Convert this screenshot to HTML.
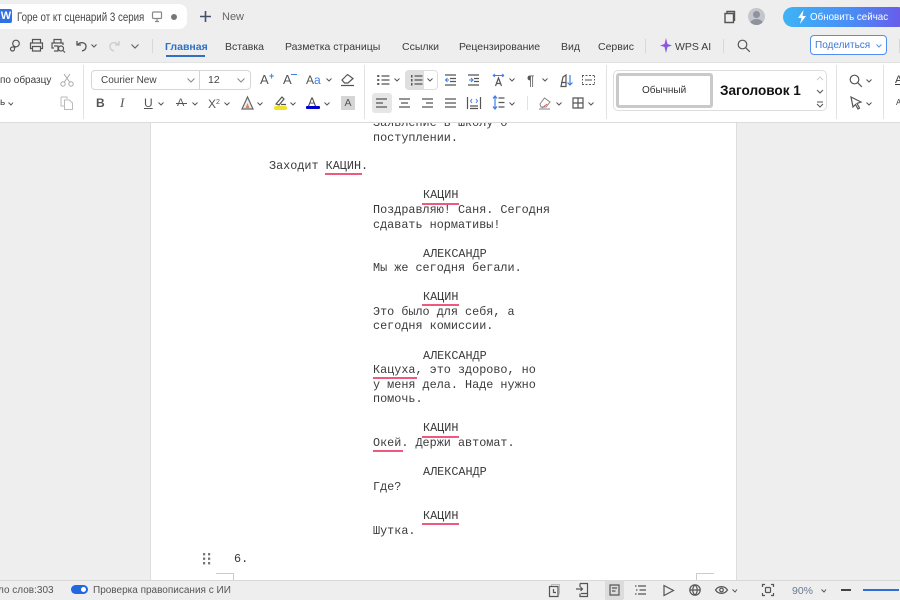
<!DOCTYPE html>
<html><head><meta charset="utf-8">
<style>
html,body{margin:0;padding:0}
body{width:900px;height:600px;overflow:hidden;background:#eeeeee;position:relative;font-family:"Liberation Sans","Noto Sans CJK SC",sans-serif;color:#3c3c3c;filter:blur(.25px)}
.a{position:absolute;white-space:nowrap}
.t{position:absolute;white-space:nowrap;font-size:11px;line-height:14px}
.m{position:absolute;white-space:nowrap;font-family:"Liberation Mono",monospace;font-size:11.8px;line-height:14px;color:#3a3a3a}
.u{position:absolute;height:2px;background:#ee5a7e}
svg{position:absolute;overflow:visible}
.s{fill:none;stroke:#555;stroke-width:1.2}
</style></head><body>

<!-- document page -->
<div class="a" style="left:150px;top:120px;width:587px;height:470px;background:#fff;border-right:1px solid #ddd;border-left:1px solid #ddd;box-sizing:border-box"></div>
<div class="m" style="left:373px;top:116px">Заявление в школу о</div>
<div class="m" style="left:373px;top:131px">поступлении.</div>
<div class="m" style="left:269px;top:159px">Заходит КАЦИН.</div>
<div class="u" style="left:325px;top:173px;width:37px"></div>
<div class="m" style="left:423px;top:188px">КАЦИН</div>
<div class="u" style="left:422px;top:203px;width:37px"></div>
<div class="m" style="left:373px;top:203px">Поздравляю! Саня. Сегодня</div>
<div class="m" style="left:373px;top:218px">сдавать нормативы!</div>
<div class="m" style="left:423px;top:247px">АЛЕКСАНДР</div>
<div class="m" style="left:373px;top:261px">Мы же сегодня бегали.</div>
<div class="m" style="left:423px;top:290px">КАЦИН</div>
<div class="u" style="left:422px;top:304px;width:37px"></div>
<div class="m" style="left:373px;top:305px">Это было для себя, а</div>
<div class="m" style="left:373px;top:319px">сегодня комиссии.</div>
<div class="m" style="left:423px;top:349px">АЛЕКСАНДР</div>
<div class="m" style="left:373px;top:363px">Кацуха, это здорово, но</div>
<div class="u" style="left:373px;top:377px;width:44px"></div>
<div class="m" style="left:373px;top:378px">у меня дела. Наде нужно</div>
<div class="m" style="left:373px;top:392px">помочь.</div>
<div class="m" style="left:423px;top:421px">КАЦИН</div>
<div class="u" style="left:422px;top:436px;width:37px"></div>
<div class="m" style="left:373px;top:436px">Окей. Держи автомат.</div>
<div class="u" style="left:373px;top:450px;width:30px"></div>
<div class="m" style="left:423px;top:465px">АЛЕКСАНДР</div>
<div class="m" style="left:373px;top:480px">Где?</div>
<div class="m" style="left:423px;top:509px">КАЦИН</div>
<div class="u" style="left:422px;top:523px;width:37px"></div>
<div class="m" style="left:373px;top:524px">Шутка.</div>
<div class="m" style="left:234px;top:552px">6.</div>
<svg style="left:202px;top:553px" width="10" height="13" fill="#777"><rect x="1" y="0" width="2.200" height="2.400"/><rect x="6" y="0" width="2.200" height="2.400"/><rect x="1" y="4.500" width="2.200" height="2.400"/><rect x="6" y="4.500" width="2.200" height="2.400"/><rect x="1" y="9" width="2.200" height="2.400"/><rect x="6" y="9" width="2.200" height="2.400"/></svg>
<div class="a" style="left:216px;top:573px;width:17px;height:8px;border-top:1px solid #ccc;border-right:1px solid #ccc"></div>
<div class="a" style="left:696px;top:573px;width:17px;height:8px;border-top:1px solid #ccc;border-left:1px solid #ccc"></div>

<!-- title bar -->
<div class="a" style="left:0;top:4px;width:187px;height:25px;background:#fff;border-radius:0 8px 8px 0"></div>
<div class="a" style="left:0;top:9px;width:12px;height:14px;background:#2f6fe8;border-radius:0 2px 2px 0;color:#fff;font-size:11px;font-weight:bold;line-height:14px;text-align:center">W</div>
<div class="t" style="left:17px;top:10px;font-size:12px;color:#444;transform:scaleX(.81);transform-origin:left">Горе от кт сценарий 3 серия</div>
<svg style="left:151px;top:11px" width="14" height="12"><rect class="s" x="1.500" y="1" width="9" height="6.500" rx="1" style="stroke:#888"/><path class="s" style="stroke:#888" d="M6 8v2M4 10.500h4"/></svg>
<div class="a" style="left:171px;top:14px;width:6px;height:6px;border-radius:50%;background:#777"></div>
<svg style="left:199px;top:10px" width="13" height="13"><path d="M6.500 1v11M1 6.500h11" stroke="#44506a" stroke-width="1.600" fill="none"/></svg>
<div class="t" style="left:222px;top:10px;color:#666;font-size:11px">New</div>

<svg style="left:722px;top:10px" width="14" height="14"><path d="M3 3.500h8.500v9H3z M5 3V1.500h7.500V11" fill="none" stroke="#555" stroke-width="1.400"/></svg>
<div class="a" style="left:748px;top:8px;width:17px;height:17px;border-radius:50%;background:#c3c6cc;overflow:hidden"><div class="a" style="left:5px;top:3px;width:7px;height:7px;border-radius:50%;background:#8d929c"></div><div class="a" style="left:2px;top:11px;width:13px;height:9px;border-radius:50%;background:#8d929c"></div></div>
<div class="a" style="left:783px;top:7px;width:125px;height:20px;border-radius:10px;background:linear-gradient(90deg,#3db4f5,#4a8cf6 55%,#6d55e8)"></div>
<svg style="left:796px;top:9px" width="12" height="16"><path d="M7.500 1 2 9h3.500L4 15l6-8H6.500z" fill="#fff"/></svg>
<div class="t" style="left:810px;top:10px;color:#fff;font-size:10.500px;transform:scaleX(.93);transform-origin:left">Обновить сейчас</div>

<!-- menu row -->
<svg style="left:9px;top:39px" width="13" height="13"><circle class="s" cx="7" cy="4.500" r="3.300"/><path class="s" d="M7 8H3.500a2 2 0 1 0 2 2V8"/></svg>
<svg style="left:29px;top:38px" width="15" height="14"><path class="s" d="M3.500 5V1.500h8V5M3.500 10.500H1.500V5h12v5.500h-2M3.500 8.500h8v4.500h-8z"/></svg>
<svg style="left:51px;top:38px" width="15" height="15"><path class="s" d="M3 5V1.500h7V5M3 10H1V5h11v2M3 8h4v5H3"/><circle class="s" cx="10" cy="10.500" r="2.500"/><path class="s" d="m12 12.500 2 2"/></svg>
<svg style="left:76px;top:40px" width="12" height="12"><path d="M1 1v4h4M1.500 5C4 1.500 10 2 10 6.500 10 9 8 10.500 6 11" fill="none" stroke="#555" stroke-width="1.300"/></svg>
<svg style="left:91px;top:44px" width="7" height="4"><path d="m.5.500 2.500 2.500L5.500.500" fill="none" stroke="#555" stroke-width="1.100"/></svg>
<svg style="left:108px;top:40px" width="12" height="12"><path d="M11 1v4H7M10.500 5C8 1.500 2 2 2 6.500 2 9 4 10.500 6 11" fill="none" stroke="#ccc" stroke-width="1.300"/></svg>
<svg style="left:131px;top:44px" width="9" height="5"><path d="m.5.500 3.500 3.500L7.500.500" fill="none" stroke="#666" stroke-width="1.200"/></svg>
<div class="a" style="left:152px;top:39px;width:1px;height:14px;background:#d8d8d8"></div>
<div class="t" style="left:165px;top:40px;color:#2f6fc4;font-weight:bold;font-size:10.500px">Главная</div>
<div class="a" style="left:166px;top:55px;width:39px;height:2px;background:#2f6fc4"></div>
<div class="t" style="left:225px;top:40px;font-size:10.500px">Вставка</div>
<div class="t" style="left:285px;top:40px;font-size:10.500px">Разметка страницы</div>
<div class="t" style="left:402px;top:40px;font-size:10.500px">Ссылки</div>
<div class="t" style="left:459px;top:40px;font-size:10.500px">Рецензирование</div>
<div class="t" style="left:561px;top:40px;font-size:10.500px">Вид</div>
<div class="t" style="left:598px;top:40px;font-size:10.500px">Сервис</div>
<div class="a" style="left:645px;top:39px;width:1px;height:14px;background:#d8d8d8"></div>
<svg style="left:659px;top:38px" width="14" height="15"><defs><linearGradient id="g" x1="0" y1="0" x2="1" y2="1"><stop offset="0" stop-color="#d43fd8"/><stop offset="1" stop-color="#3f6ff0"/></linearGradient></defs><path d="M7 0 8.500 6 13 7.500 8.500 9 7 15 5.500 9 1 7.500 5.500 6z" fill="url(#g)"/></svg>
<div class="t" style="left:675px;top:40px;font-size:10.500px">WPS AI</div>
<div class="a" style="left:723px;top:39px;width:1px;height:14px;background:#d8d8d8"></div>
<svg style="left:737px;top:39px" width="14" height="14"><circle class="s" cx="5.500" cy="5.500" r="4.300"/><path class="s" d="m8.800 8.800 4 4"/></svg>
<div class="a" style="left:810px;top:35px;width:77px;height:20px;box-sizing:border-box;background:#fff;border:1px solid #4f8ef0;border-radius:4px"></div>
<div class="t" style="left:815px;top:39px;color:#3c78d8;font-size:10px">Поделиться</div>
<svg style="left:876px;top:44px" width="7" height="4"><path d="m.5.500 2.500 2.500L5.500.500" fill="none" stroke="#5b8fe0" stroke-width="1"/></svg>
<div class="a" style="left:899px;top:39px;width:1px;height:14px;background:#d8d8d8"></div>

<!-- ribbon -->
<div class="a" style="left:0;top:62px;width:900px;height:61px;background:#fff;border-top:1px solid #e2e2e2;border-bottom:1px solid #dcdcdc;box-sizing:border-box"></div>
<div class="t" style="left:0;top:74px;font-size:10px">по образцу</div>
<svg style="left:60px;top:73px" width="14" height="14"><circle cx="3" cy="11" r="2.200" fill="none" stroke="#aaa"/><circle cx="11" cy="11" r="2.200" fill="none" stroke="#aaa"/><path d="M4 9.500 10 1M10 9.500 4 1" stroke="#aaa" fill="none"/></svg>
<svg style="left:60px;top:96px" width="14" height="14"><path d="M1 1h6v2M1 1v9h3M4.500 4h5l3 3v6.500h-8z" fill="none" stroke="#bbb"/></svg>
<div class="t" style="left:0;top:96px;font-size:10px">ь</div>
<svg style="left:8px;top:102px" width="6" height="4"><path d="m.5.500 2.500 2.500L5 .500" fill="none" stroke="#555"/></svg>
<div class="a" style="left:83px;top:65px;width:1px;height:54px;background:#e2e2e2"></div>

<!-- font box -->
<div class="a" style="left:91px;top:70px;width:160px;height:20px;box-sizing:border-box;border:1px solid #d5d5d5;border-radius:4px;background:#fff"></div>
<div class="a" style="left:199px;top:70px;width:1px;height:20px;background:#d5d5d5"></div>
<div class="t" style="left:101px;top:74px;font-size:10px;color:#444">Courier New</div>
<svg style="left:187px;top:78px" width="8" height="5"><path d="m.5.500 3.500 3.500L7.500.500" fill="none" stroke="#888"/></svg>
<div class="t" style="left:208px;top:73px;font-size:10.500px;color:#444">12</div>
<svg style="left:237px;top:78px" width="8" height="5"><path d="m.5.500 3.500 3.500L7.500.500" fill="none" stroke="#888"/></svg>
<div class="t" style="left:260px;top:73px;font-size:13px;color:#555">A</div>
<div class="t" style="left:269px;top:69px;font-size:9px;color:#3d7fe6;font-weight:bold">+</div>
<div class="t" style="left:283px;top:73px;font-size:13px;color:#555">A</div>
<div class="a" style="left:291px;top:74px;width:6px;height:1px;background:#3d7fe6"></div>
<div class="t" style="left:306px;top:73px;font-size:12px;color:#555">A<span style="color:#3d7fe6">a</span></div>
<svg style="left:326px;top:78px" width="6" height="4"><path d="m.5.500 2.500 2.500L5.500.500" fill="none" stroke="#555"/></svg>
<svg style="left:340px;top:73px" width="15" height="14"><path class="s" d="M2 7 7.500 1.500 13 5.500 8 10H4.500zM1 12.500h13"/></svg>
<div class="a" style="left:364px;top:65px;width:1px;height:54px;background:#e2e2e2"></div>

<!-- format row -->
<div class="t" style="left:96px;top:96px;font-weight:bold;font-size:12px;color:#555">B</div>
<div class="t" style="left:120px;top:96px;font-style:italic;font-size:13px;color:#555;font-family:'Liberation Serif',serif">I</div>
<div class="t" style="left:144px;top:96px;font-size:12px;color:#555;text-decoration:underline">U</div>
<svg style="left:158px;top:102px" width="6" height="4"><path d="m.5.500 2.500 2.500L5.500.500" fill="none" stroke="#555"/></svg>
<div class="t" style="left:177px;top:96px;font-size:11px;color:#555">A</div>
<div class="a" style="left:176px;top:103px;width:11px;height:1px;background:#555"></div>
<svg style="left:192px;top:102px" width="6" height="4"><path d="m.5.500 2.500 2.500L5.500.500" fill="none" stroke="#555"/></svg>
<div class="t" style="left:208px;top:96px;font-size:12px;color:#555">X<span style="font-size:7px;vertical-align:4px">2</span></div>
<svg style="left:224px;top:102px" width="6" height="4"><path d="m.5.500 2.500 2.500L5.500.500" fill="none" stroke="#555"/></svg>
<svg style="left:241px;top:96px" width="13" height="14"><path d="M6.500 1 1 13h11z" fill="#eee" stroke="#666" stroke-width="1.200"/><path d="M6.500 7 4.500 12h4z" fill="#e8824f"/></svg>
<svg style="left:257px;top:102px" width="6" height="4"><path d="m.5.500 2.500 2.500L5.500.500" fill="none" stroke="#555"/></svg>
<svg style="left:274px;top:95px" width="13" height="11"><path class="s" d="M2 9 8 2l2 2-5 6zM7 9.500h5"/></svg>
<div class="a" style="left:274px;top:106px;width:13px;height:4px;background:#f2e22e;border-radius:2px"></div>
<svg style="left:290px;top:102px" width="6" height="4"><path d="m.5.500 2.500 2.500L5.500.500" fill="none" stroke="#555"/></svg>
<div class="t" style="left:308px;top:95px;font-size:12px;color:#444">A</div>
<div class="a" style="left:306px;top:106px;width:14px;height:3px;background:#0000d0;border-radius:1px"></div>
<svg style="left:324px;top:102px" width="6" height="4"><path d="m.5.500 2.500 2.500L5.500.500" fill="none" stroke="#555"/></svg>
<div class="a" style="left:341px;top:96px;width:14px;height:14px;background:#d5d5d5;color:#555;font-size:10.500px;line-height:14px;text-align:center">A</div>

<!-- paragraph -->
<svg style="left:377px;top:74px" width="13" height="12"><g fill="#555"><rect x="0" y="1" width="2.500" height="2" rx="1"/><rect x="0" y="5" width="2.500" height="2" rx="1"/><rect x="0" y="9" width="2.500" height="2" rx="1"/></g><path class="s" d="M4.500 2h8M4.500 6h8M4.500 10h8"/></svg>
<svg style="left:394px;top:78px" width="6" height="4"><path d="m.5.500 2.500 2.500L5.500.500" fill="none" stroke="#555"/></svg>
<div class="a" style="left:405px;top:70px;width:33px;height:20px;box-sizing:border-box;border:1px solid #ddd;border-radius:4px;background:#fff"></div>
<div class="a" style="left:405px;top:70px;width:19px;height:20px;background:#dfdfdf;border-radius:4px 0 0 4px"></div>
<svg style="left:410px;top:74px" width="13" height="12"><g fill="#555"><rect x="1" y="1" width="1.500" height="2.500"/><rect x="1" y="5" width="1.500" height="2.500"/><rect x="1" y="9" width="1.500" height="2.500"/></g><path class="s" d="M4.500 2h8M4.500 6h8M4.500 10h8"/></svg>
<svg style="left:427px;top:78px" width="6" height="4"><path d="m.5.500 2.500 2.500L5.500.500" fill="none" stroke="#555"/></svg>
<svg style="left:445px;top:74px" width="12" height="12"><path class="s" d="M0 1h11M5 4.500h6M5 7.500h6M0 11h11"/><path d="M4 6H.500m2-2L.500 6l2 2" stroke="#3d7fe6" fill="none"/></svg>
<svg style="left:468px;top:74px" width="12" height="12"><path class="s" d="M0 1h11M6 4.500h5M6 7.500h5M0 11h11"/><path d="M1 6h4m-2-2 2 2-2 2" stroke="#3d7fe6" fill="none"/></svg>
<svg style="left:492px;top:73px" width="14" height="14"><path d="M1 2.500h11M1 2.500l2-1.500M1 2.500l2 1.500M12 2.500l-2-1.500M12 2.500l-2 1.500" stroke="#3d7fe6" fill="none"/><path class="s" d="M3.500 13 6.500 5l3 8M4.500 10.500h4"/></svg>
<svg style="left:509px;top:78px" width="6" height="4"><path d="m.5.500 2.500 2.500L5.500.500" fill="none" stroke="#555"/></svg>
<div class="t" style="left:527px;top:73px;font-size:14px;color:#555">¶</div>
<svg style="left:542px;top:78px" width="6" height="4"><path d="m.5.500 2.500 2.500L5.500.500" fill="none" stroke="#555"/></svg>
<svg style="left:560px;top:74px" width="14" height="13"><path class="s" d="M1 12.500 3 3l3-2v11.500zM1 8.500h5"/><path d="M10 1v10m-2.500-2.500L10 11l2.500-2.500" stroke="#3d7fe6" fill="none" stroke-width="1.200"/></svg>
<svg style="left:582px;top:75px" width="14" height="11"><path d="M0 .500h13M0 9.500h13" stroke="#555" stroke-dasharray="2 1.500"/><path d="M.500 1v8M12.500 1v8" stroke="#555" stroke-dasharray="1.500 1.500"/><path d="M3 5h7" stroke="#555"/></svg>

<div class="a" style="left:372px;top:93px;width:20px;height:20px;background:#e6e6e6;border-radius:3px"></div>
<svg style="left:376px;top:98px" width="12" height="10"><path class="s" d="M0 1h11M0 5h7M0 9h11"/></svg>
<svg style="left:399px;top:98px" width="12" height="10"><path class="s" d="M0 1h11M2 5h7M0 9h11"/></svg>
<svg style="left:422px;top:98px" width="12" height="10"><path class="s" d="M0 1h11M4 5h7M0 9h11"/></svg>
<svg style="left:445px;top:98px" width="12" height="10"><path class="s" d="M0 1h11M0 5h11M0 9h11"/></svg>
<svg style="left:467px;top:96px" width="14" height="14"><path class="s" d="M.500 1v12M13.500 1v12M3 10h8M3 12.500h8"/><path d="M5 3 3.500 5 5 7M9 3l1.500 2L9 7" stroke="#3d7fe6" fill="none"/></svg>
<svg style="left:492px;top:95px" width="13" height="15"><path d="M3 1v13M1 3.500 3 1l2 2.500M1 11.500 3 14l2-2.500" stroke="#3d7fe6" fill="none" stroke-width="1.200"/><path class="s" d="M6.500 3h6M6.500 7.500h6M6.500 12h6"/></svg>
<svg style="left:509px;top:102px" width="6" height="4"><path d="m.5.500 2.500 2.500L5.500.500" fill="none" stroke="#555"/></svg>
<div class="a" style="left:527px;top:96px;width:1px;height:14px;background:#e2e2e2"></div>
<svg style="left:538px;top:96px" width="14" height="15"><path d="M2 8 6.500 2 12 6 8 11H3z" fill="none" stroke="#888"/><path d="M1 13h11" stroke="#aaa" stroke-width="1.500"/><path d="M4 12 9 8" stroke="#e45b5b"/></svg>
<svg style="left:556px;top:102px" width="6" height="4"><path d="m.5.500 2.500 2.500L5.500.500" fill="none" stroke="#555"/></svg>
<svg style="left:572px;top:97px" width="12" height="12"><path class="s" d="M1 1h10v10H1zM6 1v10M1 6h10"/></svg>
<svg style="left:588px;top:102px" width="6" height="4"><path d="m.5.500 2.500 2.500L5.500.500" fill="none" stroke="#555"/></svg>
<div class="a" style="left:606px;top:65px;width:1px;height:54px;background:#e2e2e2"></div>

<!-- styles -->
<div class="a" style="left:613px;top:70px;width:214px;height:41px;box-sizing:border-box;border:1px solid #ddd;border-radius:5px;background:#fff"></div>
<div class="a" style="left:616px;top:73px;width:97px;height:35px;box-sizing:border-box;border:3px solid #c9c9c9;border-radius:3px;background:#fff"></div>
<div class="t" style="left:642px;top:84px;font-size:10px;color:#333">Обычный</div>
<div class="t" style="left:720px;top:83px;font-size:14px;font-weight:bold;color:#111;transform:scaleX(.97);transform-origin:left">Заголовок 1</div>
<svg style="left:816px;top:76px" width="8" height="5"><path d="m1 4 3-3 3 3" fill="none" stroke="#ccc"/></svg>
<svg style="left:816px;top:89px" width="8" height="5"><path d="m1 1 3 3 3-3" fill="none" stroke="#555"/></svg>
<svg style="left:816px;top:101px" width="8" height="7"><path d="M1 1h6M1 3l3 3 3-3" fill="none" stroke="#555"/></svg>
<div class="a" style="left:836px;top:65px;width:1px;height:54px;background:#e2e2e2"></div>
<svg style="left:849px;top:74px" width="14" height="14"><circle class="s" cx="5.500" cy="5.500" r="4.300"/><path class="s" d="m8.800 8.800 4 4"/></svg>
<svg style="left:866px;top:79px" width="6" height="4"><path d="m.5.500 2.500 2.500L5.500.500" fill="none" stroke="#555"/></svg>
<svg style="left:850px;top:96px" width="13" height="14"><path class="s" d="M1 1 11 6 7 7.500 9.500 12 8 13 5.500 8.500 3 11z"/></svg>
<svg style="left:866px;top:102px" width="6" height="4"><path d="m.5.500 2.500 2.500L5.500.500" fill="none" stroke="#555"/></svg>
<div class="a" style="left:883px;top:65px;width:1px;height:54px;background:#e2e2e2"></div>
<div class="t" style="left:895px;top:73px;font-size:11px;text-decoration:underline">A</div>
<div class="t" style="left:896px;top:96px;font-size:8px">A</div>

<!-- status bar -->
<div class="a" style="left:0;top:580px;width:900px;height:20px;background:#eeeeee;border-top:1px solid #d8d8d8;box-sizing:border-box"></div>
<div class="t" style="left:-7px;top:584px;font-size:10px;color:#555">сло слов:303</div>
<div class="a" style="left:71px;top:585px;width:17px;height:9px;background:#2468e0;border-radius:5px"></div>
<div class="a" style="left:81px;top:587px;width:5px;height:5px;background:#fff;border-radius:50%"></div>
<div class="t" style="left:93px;top:584px;font-size:10px;color:#555">Проверка правописания с ИИ</div>
<svg style="left:549px;top:584px" width="12" height="13"><path d="M2.500 2.500V.500h8v10" fill="none" stroke="#bbb"/><path class="s" d="M.500 2.500h8.500v10H.500zM4.500 5v3.500h2.500"/></svg>
<svg style="left:576px;top:583px" width="13" height="14"><path class="s" d="M4 .500h7.500v13H4v-3M4 4V.500M0 6h6.500M4.500 4l2 2-2 2M5 10.500h6.500"/></svg>
<div class="a" style="left:605px;top:580px;width:19px;height:20px;background:#dcdcdc;border-radius:2px"></div>
<svg style="left:609px;top:584px" width="11" height="12"><path class="s" d="M1 1h9v10H1zM3 4h5M3 7h3.500"/></svg>
<svg style="left:635px;top:585px" width="12" height="10"><path class="s" d="M3 1h8M4.500 5H11M3 9h8M0 1h1.500M1 5h1.500M0 9h1.500"/></svg>
<svg style="left:663px;top:585px" width="12" height="11"><path class="s" d="M1 .500 10.500 5.500 1 10.500z"/></svg>
<svg style="left:689px;top:584px" width="12" height="12"><circle class="s" cx="6" cy="6" r="5.200"/><path class="s" d="M.800 6h10.400M6 .800c-3 3-3 7.400 0 10.400M6 .800c3 3 3 7.400 0 10.400"/></svg>
<svg style="left:715px;top:585px" width="13" height="10"><path class="s" d="M.500 5C3.500.500 9.500.500 12.500 5 9.500 9.500 3.500 9.500.500 5z"/><circle class="s" cx="6.500" cy="5" r="1.800"/></svg>
<svg style="left:732px;top:589px" width="6" height="4"><path d="m.5.500 2.500 2.500L5 .500" fill="none" stroke="#555"/></svg>
<svg style="left:762px;top:584px" width="12" height="12"><path class="s" d="M.500 3V.500H3M9 .500h2.500V3M.500 9v2.500H3M9 11.500h2.500V9"/><rect class="s" x="3.500" y="3.500" width="5" height="5" rx="1"/></svg>
<div class="t" style="left:792px;top:584px;font-size:10.500px;color:#6a7a90">90%</div>
<svg style="left:821px;top:589px" width="6" height="4"><path d="m.5.500 2.500 2.500L5 .500" fill="none" stroke="#555"/></svg>
<div class="a" style="left:841px;top:589px;width:10px;height:2px;background:#444"></div>
<div class="a" style="left:863px;top:589px;width:37px;height:2px;background:#2f6fd8"></div>
<div class="a" style="left:899px;top:587px;width:6px;height:6px;background:#fff;border-radius:50%"></div>
</body></html>
